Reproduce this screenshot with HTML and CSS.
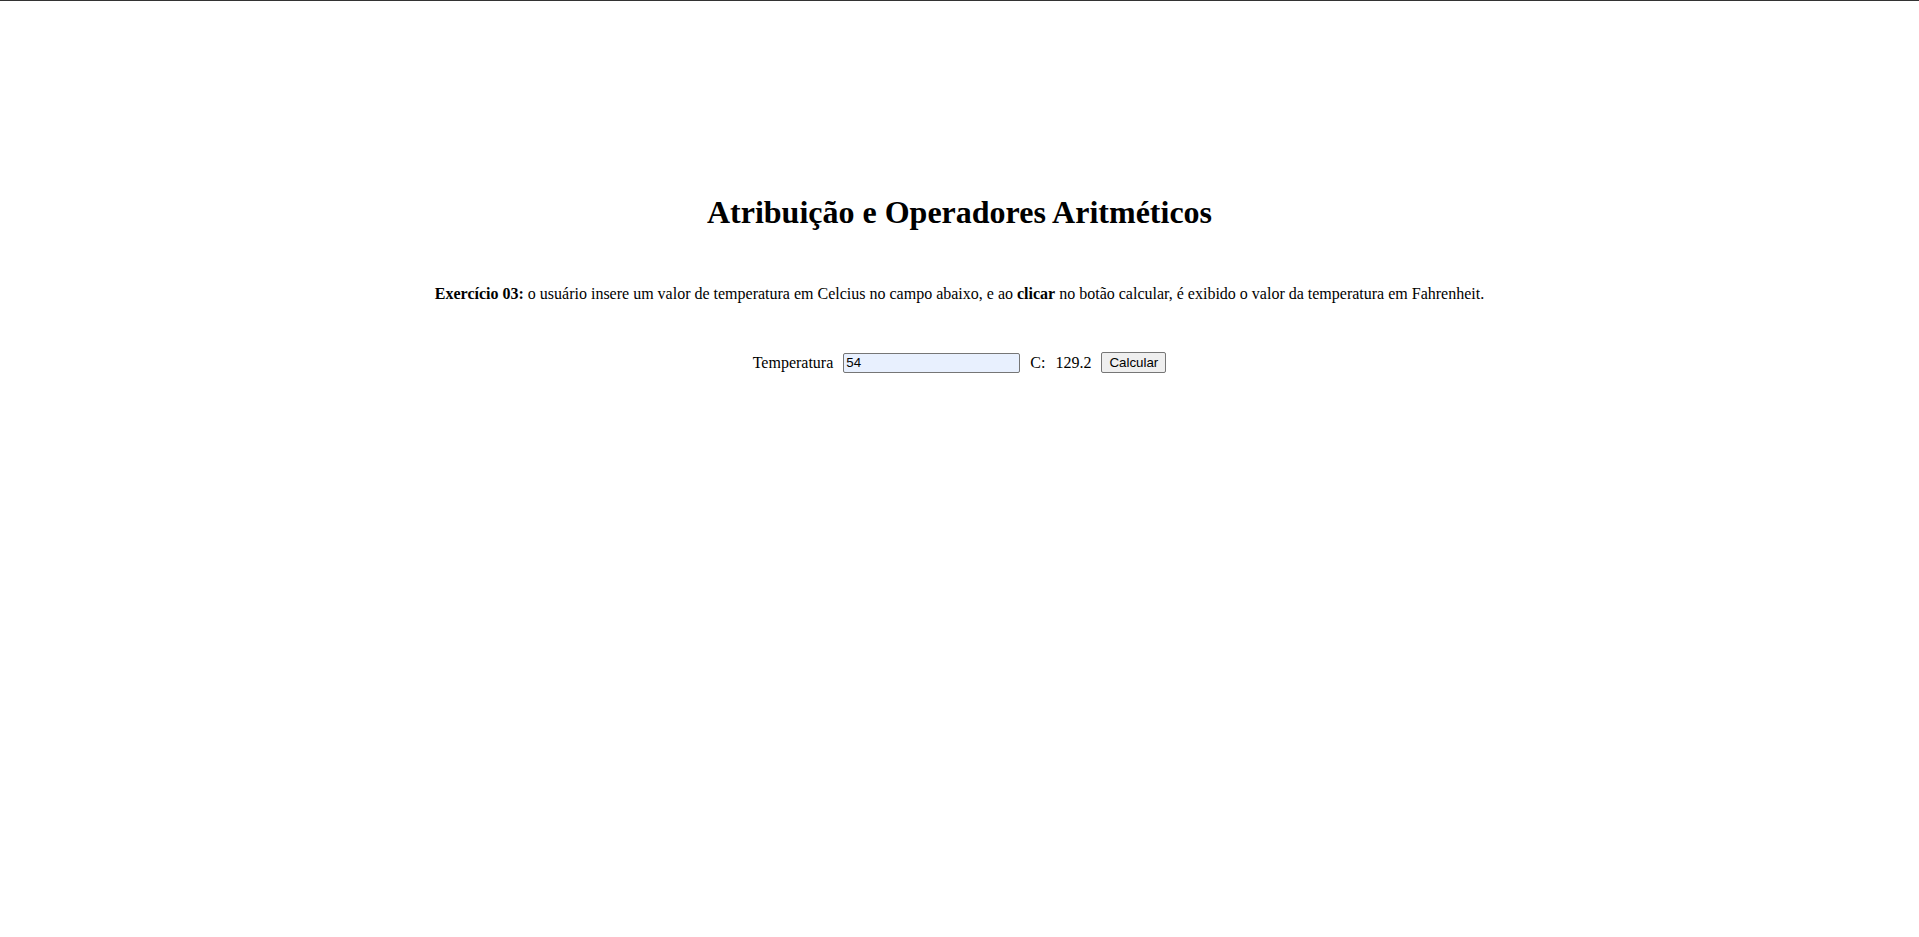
FILE: index.html
```html
<!DOCTYPE html>
<html lang="pt-BR">
<head>
<meta charset="utf-8">
<title>Atribuição e Operadores Aritméticos</title>
<link rel="stylesheet" href="styles.css">
</head>
<body>
<div class="topline"></div>
<main class="page">
  <h1 class="title">Atribuição e Operadores Aritméticos</h1>
  <p class="desc"><strong>Exercício 03:</strong> o usuário insere um valor de temperatura em Celcius no campo abaixo, e ao <strong>clicar</strong> no botão calcular, é exibido o valor da temperatura em Fahrenheit.</p>
  <div class="row">
    <label class="lbl" for="temp">Temperatura</label>
    <input class="field" id="temp" type="text" value="54">
    <span class="lbl">C:</span>
    <span class="lbl">129.2</span>
    <button class="btn" type="button">Calcular</button>
  </div>
</main>
</body>
</html>
```
FILE: styles.css
```css
html, body {
  margin: 0;
  padding: 0;
  background: #fff;
}
body {
  font-family: "Liberation Serif", "Times New Roman", serif;
  color: #000;
}
.topline {
  height: 1px;
  background: #333;
}
.page {
  display: flex;
  flex-direction: column;
  align-items: center;
  padding-top: 193px;
}
.title {
  font-size: 32px;
  font-weight: bold;
  margin: 0;
  line-height: 37px;
}
.desc {
  font-size: 16px;
  margin: 53px 0 0;
  line-height: 19px;
}
.row {
  margin-top: 49px;
  display: flex;
  align-items: center;
  gap: 10px;
  font-size: 16px;
}
.field {
  width: 177px;
  height: 20px;
  box-sizing: border-box;
  border: 1px solid #767676;
  border-radius: 2px;
  background: #e8f0fe;
  font-family: "Liberation Sans", Arial, sans-serif;
  font-size: 13.33px;
  padding: 1px 2px;
  margin: 0;
}
.btn {
  height: 21px;
  box-sizing: border-box;
  border: 1px solid #767676;
  border-radius: 2px;
  background: #efefef;
  font-family: "Liberation Sans", Arial, sans-serif;
  font-size: 13.33px;
  padding: 1px 7px;
  margin: 0;
}
```
